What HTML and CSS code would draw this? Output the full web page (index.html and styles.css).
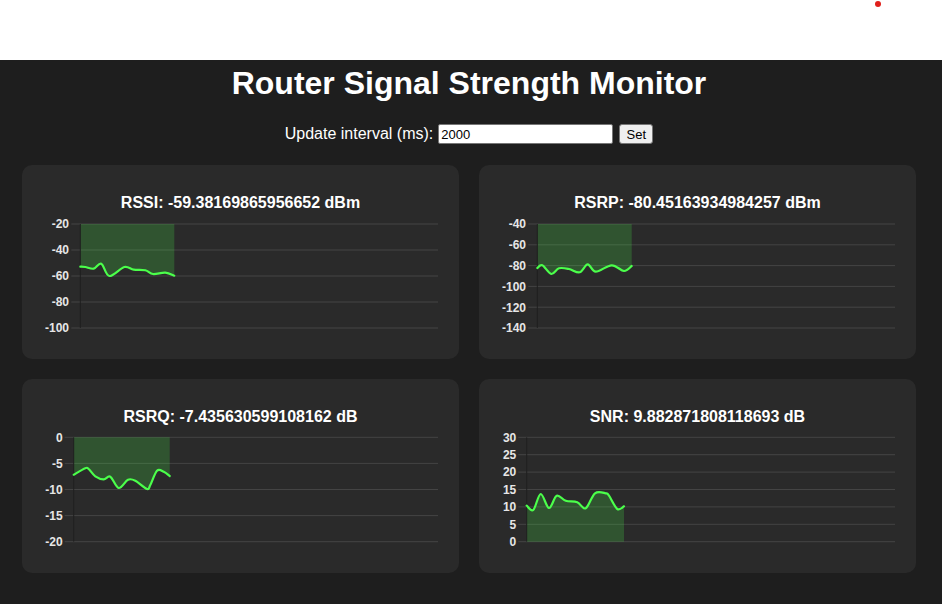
FILE: index.html
```html
<!DOCTYPE html>
<html lang="en">
<head>
<meta charset="utf-8">
<title>Router Signal Strength Monitor</title>
<link rel="stylesheet" href="styles.css">
</head>
<body>
<div class="topbar"><span class="dot"></span></div>
<main class="page">
  <h1 class="title">Router Signal Strength Monitor</h1>
  <div class="controls">
    <label class="controls-label" for="interval">Update interval (ms):</label>
    <input class="controls-input" id="interval" type="text" value="2000">
    <button class="controls-btn" type="button">Set</button>
  </div>
  <section class="grid">
    <div class="card">
      <h2 class="card-title">RSSI: -59.38169865956652 dBm</h2>
      <svg class="chart" width="397" height="128" viewBox="0 0 397 128" data-base="12"
        data-pts="38.3,54.7 43.3,55 51.7,56.7 59.3,51.7 67.3,64 82.3,55 91.7,57.7 103.3,58.3 111,62 123.3,60.7 132.3,63.7">
        <g class="grid-lines">
          <line x1="29.3" x2="396" y1="12" y2="12"/>
          <line x1="29.3" x2="396" y1="38" y2="38"/>
          <line x1="29.3" x2="396" y1="64" y2="64"/>
          <line x1="29.3" x2="396" y1="90" y2="90"/>
          <line x1="29.3" x2="396" y1="116" y2="116"/>
        </g>
        <path class="area" d=""/>
        <line class="axis" x1="38.3" x2="38.3" y1="12" y2="116"/>
        <path class="line" d=""/>
        <g class="labels">
          <text x="27" y="16.3">-20</text>
          <text x="27" y="42.3">-40</text>
          <text x="27" y="68.3">-60</text>
          <text x="27" y="94.3">-80</text>
          <text x="27" y="120.3">-100</text>
        </g>
      </svg>
    </div>
    <div class="card">
      <h2 class="card-title">RSRP: -80.45163934984257 dBm</h2>
      <svg class="chart" width="397" height="128" viewBox="0 0 397 128" data-base="12"
        data-pts="38.3,56 43.3,53.3 52.3,62 60,56.3 70,57 80.7,60.3 88.7,52.3 96.7,59.7 112.7,53.3 125,59 132.7,54">
        <g class="grid-lines">
          <line x1="29.3" x2="396" y1="12" y2="12"/>
          <line x1="29.3" x2="396" y1="32.8" y2="32.8"/>
          <line x1="29.3" x2="396" y1="53.6" y2="53.6"/>
          <line x1="29.3" x2="396" y1="74.4" y2="74.4"/>
          <line x1="29.3" x2="396" y1="95.2" y2="95.2"/>
          <line x1="29.3" x2="396" y1="116" y2="116"/>
        </g>
        <path class="area" d=""/>
        <line class="axis" x1="38.3" x2="38.3" y1="12" y2="116"/>
        <path class="line" d=""/>
        <g class="labels">
          <text x="27" y="16.3">-40</text>
          <text x="27" y="37.1">-60</text>
          <text x="27" y="57.9">-80</text>
          <text x="27" y="78.7">-100</text>
          <text x="27" y="99.5">-120</text>
          <text x="27" y="120.3">-140</text>
        </g>
      </svg>
    </div>
    <div class="card">
      <h2 class="card-title">RSRQ: -7.435630599108162 dB</h2>
      <svg class="chart" width="397" height="128" viewBox="0 0 397 128" data-base="11.3"
        data-pts="31.7,48.7 43.3,42.3 46.7,43 53.3,50.3 61.7,53.3 68.3,50.7 76.7,62 86,53.7 93.3,54.7 105,63 108.3,59 115,44.7 121.7,45.7 127.7,50">
        <g class="grid-lines">
          <line x1="22.7" x2="396" y1="11.3" y2="11.3"/>
          <line x1="22.7" x2="396" y1="37.4" y2="37.4"/>
          <line x1="22.7" x2="396" y1="63.5" y2="63.5"/>
          <line x1="22.7" x2="396" y1="89.6" y2="89.6"/>
          <line x1="22.7" x2="396" y1="115.7" y2="115.7"/>
        </g>
        <path class="area" d=""/>
        <line class="axis" x1="31.7" x2="31.7" y1="11.3" y2="115.7"/>
        <path class="line" d=""/>
        <g class="labels">
          <text x="20.7" y="15.6">0</text>
          <text x="20.7" y="41.7">-5</text>
          <text x="20.7" y="67.8">-10</text>
          <text x="20.7" y="93.9">-15</text>
          <text x="20.7" y="120">-20</text>
        </g>
      </svg>
    </div>
    <div class="card">
      <h2 class="card-title">SNR: 9.882871808118693 dB</h2>
      <svg class="chart" width="397" height="128" viewBox="0 0 397 128" data-base="115.7"
        data-pts="27.7,79.7 34.3,84 41.7,68 50,82 57.7,69.7 66.7,74.7 78.3,76.3 86.7,82.3 96,67.3 106.7,67.3 110,69.7 118.3,83 125,80.3">
        <g class="grid-lines">
          <line x1="19.3" x2="396" y1="11.3" y2="11.3"/>
          <line x1="19.3" x2="396" y1="28.7" y2="28.7"/>
          <line x1="19.3" x2="396" y1="46.1" y2="46.1"/>
          <line x1="19.3" x2="396" y1="63.5" y2="63.5"/>
          <line x1="19.3" x2="396" y1="80.9" y2="80.9"/>
          <line x1="19.3" x2="396" y1="98.3" y2="98.3"/>
          <line x1="19.3" x2="396" y1="115.7" y2="115.7"/>
        </g>
        <path class="area" d=""/>
        <line class="axis" x1="27.7" x2="27.7" y1="11.3" y2="115.7"/>
        <path class="line" d=""/>
        <g class="labels">
          <text x="17.3" y="15.6">30</text>
          <text x="17.3" y="33">25</text>
          <text x="17.3" y="50.4">20</text>
          <text x="17.3" y="67.8">15</text>
          <text x="17.3" y="85.2">10</text>
          <text x="17.3" y="102.6">5</text>
          <text x="17.3" y="120">0</text>
        </g>
      </svg>
    </div>
  </section>
</main>
<script src="script.js"></script>
</body>
</html>
```

FILE: styles.css
```css
* { box-sizing: border-box; }
html, body { margin: 0; padding: 0; }
body {
  background: #1e1e1e;
  color: #ffffff;
  font-family: "Liberation Sans", Arial, sans-serif;
  width: 942px;
  height: 604px;
  overflow: hidden;
}
.topbar {
  position: relative;
  height: 60px;
  background: #ffffff;
}
.dot {
  position: absolute;
  left: 875px;
  top: 1px;
  width: 6px;
  height: 6px;
  border-radius: 50%;
  background: #e0201c;
}
.page {
  width: 938px;
}
.title {
  margin: 5px 0 0;
  font-size: 32px;
  line-height: 36px;
  font-weight: bold;
  text-align: center;
  color: #ffffff;
}
.controls {
  margin-top: 23px;
  height: 20px;
  display: flex;
  justify-content: center;
  align-items: center;
  gap: 5px;
}
.controls-label {
  font-size: 16px;
  line-height: 20px;
  color: #ffffff;
}
.controls-input {
  width: 175px;
  height: 20px;
  margin: 0;
  padding: 1px 2px;
  border: 1px solid #767676;
  border-radius: 2px;
  background: #ffffff;
  color: #000000;
  font: 13px "Liberation Sans", Arial, sans-serif;
}
.controls-btn {
  width: 34px;
  height: 20px;
  margin: 0 0 0 1px;
  padding: 0;
  border: 1px solid #767676;
  border-radius: 3px;
  background: #efefef;
  color: #000000;
  font: 13px "Liberation Sans", Arial, sans-serif;
}
.grid {
  margin-top: 21px;
  padding: 0 22px;
  display: grid;
  grid-template-columns: 1fr 1fr;
  column-gap: 20px;
  row-gap: 20px;
}
.card {
  height: 194px;
  background: #2a2a2a;
  border-radius: 10px;
  padding: 29px 20px 0;
}
.card-title {
  margin: 0;
  font-size: 16px;
  line-height: 18px;
  font-weight: bold;
  text-align: center;
  color: #ffffff;
}
.chart {
  display: block;
}
.grid-lines line {
  stroke: #444444;
  stroke-width: 1;
}
.axis {
  stroke: #1f1f1f;
  stroke-width: 1;
}
.area {
  fill: rgba(75, 255, 75, 0.2);
  stroke: none;
}
.line {
  fill: none;
  stroke: #4bff4b;
  stroke-width: 2.2;
  stroke-linejoin: round;
  stroke-linecap: round;
}
.labels text {
  font-family: "Liberation Sans", Arial, sans-serif;
  font-size: 12px;
  font-weight: bold;
  fill: #e6e6e6;
  text-anchor: end;
}
```

FILE: script.js
```js
document.querySelectorAll('svg.chart').forEach(function (svg) {
  var pts = svg.getAttribute('data-pts').trim().split(/\s+/).map(function (p) {
    return p.split(',').map(Number);
  });
  var base = parseFloat(svg.getAttribute('data-base'));
  var d = 'M' + pts[0][0] + ',' + pts[0][1];
  for (var i = 0; i < pts.length - 1; i++) {
    var p0 = pts[i - 1] || pts[i];
    var p1 = pts[i];
    var p2 = pts[i + 1];
    var p3 = pts[i + 2] || p2;
    var c1x = p1[0] + (p2[0] - p0[0]) / 6;
    var c1y = p1[1] + (p2[1] - p0[1]) / 6;
    var c2x = p2[0] - (p3[0] - p1[0]) / 6;
    var c2y = p2[1] - (p3[1] - p1[1]) / 6;
    d += ' C' + c1x.toFixed(2) + ',' + c1y.toFixed(2) + ' ' +
      c2x.toFixed(2) + ',' + c2y.toFixed(2) + ' ' + p2[0] + ',' + p2[1];
  }
  var last = pts[pts.length - 1];
  svg.querySelector('.line').setAttribute('d', d);
  svg.querySelector('.area').setAttribute('d',
    d + ' L' + last[0] + ',' + base + ' L' + pts[0][0] + ',' + base + ' Z');
});
```
